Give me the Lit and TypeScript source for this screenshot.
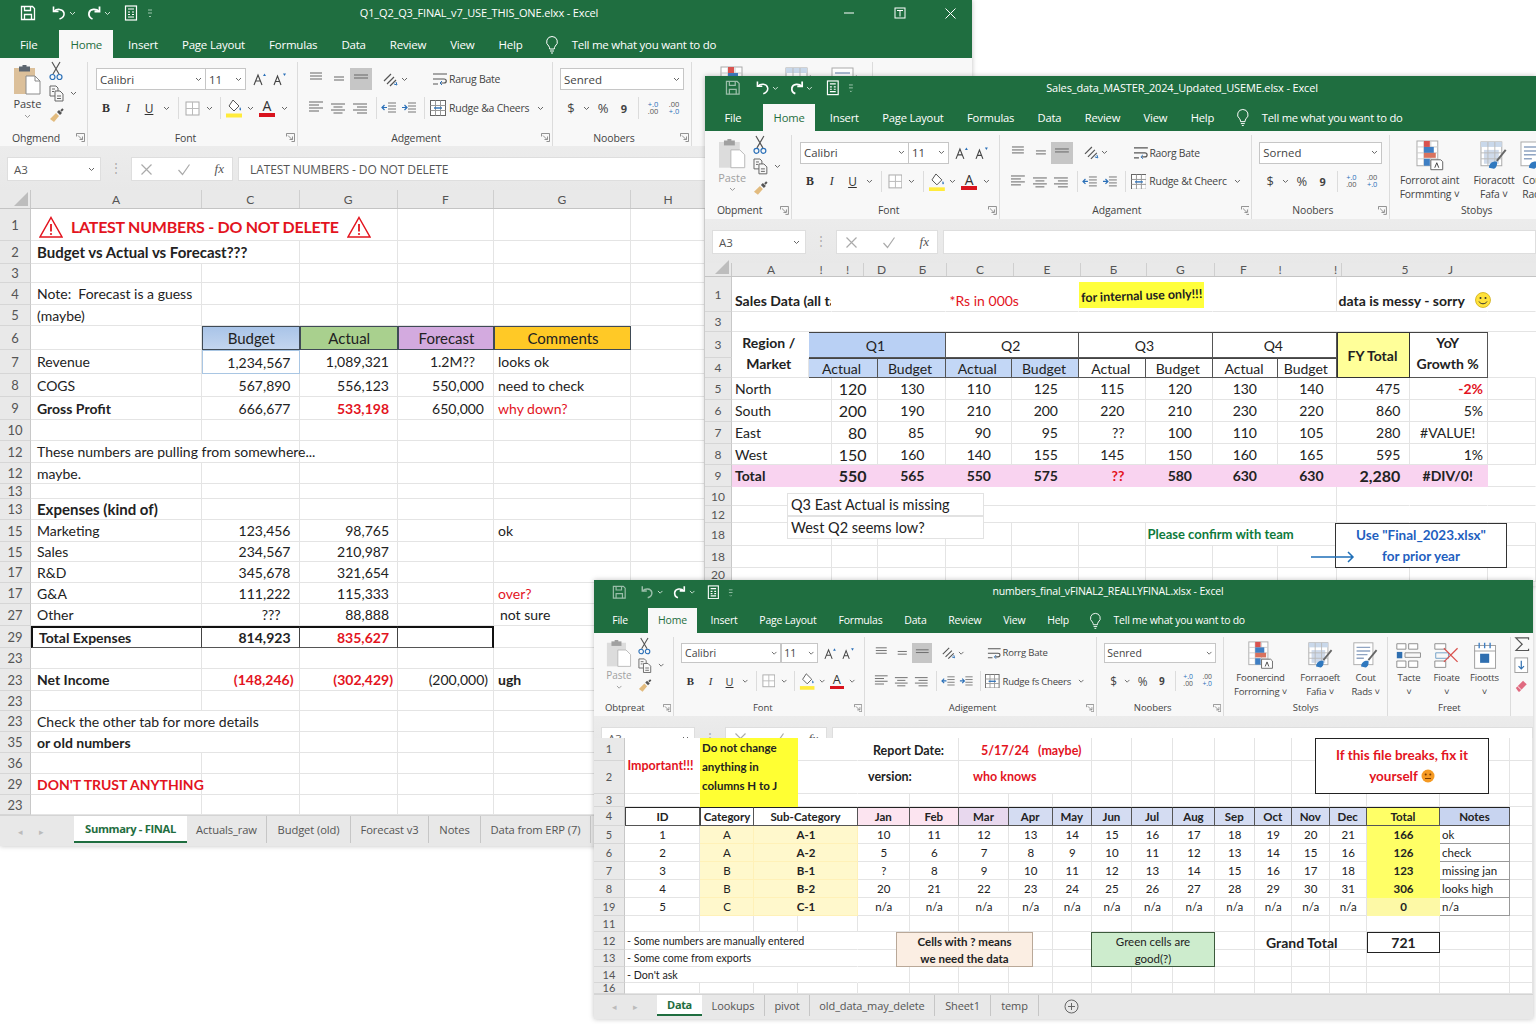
import { LitElement, html, css, svg } from "lit"
import { customElement, property } from "lit/decorators.js"

// ---------- icons ----------
const ico = (w: number, h: number, body: any, vb = `0 0 ${w} ${h}`) =>
  html`<svg width=${w} height=${h} viewBox=${vb} fill="none">${body}</svg>`

const caret = (c = "#666") =>
  ico(7, 5, svg`<path d="M1 1l2.5 2.5L6 1" stroke=${c} stroke-width="1"/>`)

const I = {
  save: ico(16, 16, svg`<g stroke="#fff" stroke-width="1.3"><path d="M1.5 1.5h11l2 2v11h-13z"/><path d="M4.5 14.5v-5h7v5M4.5 1.5v4h6v-4"/></g>`),
  undo: ico(16, 16, svg`<g stroke="#fff" stroke-width="1.6"><path d="M2.5 1.5v5h5"/><path d="M3 6.5c2.5-3 9-3 10 1.500.4 2.500-1.500 5-4.500 6"/></g>`),
  redo: ico(16, 16, svg`<g stroke="#fff" stroke-width="1.8"><path d="M13.500 1.500v5h-5"/><path d="M13 6.500c-2.500-3-9-3-10 1.500-.4 2.500 1 5 3.500 6"/></g>`),
  form: ico(14, 16, svg`<g stroke="#fff" stroke-width="1.2"><rect x="1.500" y="1" width="11" height="14"/><path d="M4 4h6M4 7h2M8 7h2M4 9.500h2M8 9.500h2M4 12h6"/></g>`),
  qmenu: ico(6, 10, svg`<path d="M1 2h4M1 5h4M2 8l1 1 1-1" stroke="#9cc4ac" stroke-width="1"/>`),
  bulb: ico(14, 19, svg`<path d="M7 1.500a5.300 5.300 0 0 0-3.300 9.500c.7.8 1 1.800 1 3h4.600c0-1.200.3-2.200 1-3A5.300 5.300 0 0 0 7 1.500zM5 16h4M6 18h2" stroke="#fff" stroke-width="1"/>`),
  paste: ico(28, 30, svg`<rect x="1" y="3" width="21" height="26" fill="#dcc09a"/><rect x="6" y="1.500" width="11" height="5" fill="#5d6670"/><rect x="9.500" y="0" width="4" height="3" fill="#5d6670"/><path d="M13 11h9l5 5v13H13z" fill="#fff" stroke="#8a8a8a"/><path d="M22 11v5h5" stroke="#8a8a8a"/>`),
  pasteOff: ico(28, 30, svg`<rect x="1" y="3" width="21" height="26" fill="#dcdcdc"/><rect x="6" y="1.500" width="11" height="5" fill="#a0a0a0"/><rect x="9.500" y="0" width="4" height="3" fill="#a0a0a0"/><path d="M13 11h9l5 5v13H13z" fill="#fff" stroke="#b8b8b8"/>`),
  scissors: ico(14, 20, svg`<g stroke-width="1.200"><path d="M3 1l7 12M11 1L4 13" stroke="#555"/><circle cx="3.500" cy="16" r="2.500" stroke="#2b70b8"/><circle cx="10.500" cy="16" r="2.500" stroke="#2b70b8"/></g>`),
  copy: ico(15, 17, svg`<g stroke="#666" stroke-width="1"><path d="M1 1h6l2 2v8H1z"/><path d="M6 6h5l3 3v7H6z" fill="#f8f8f8"/><path d="M3 4h3M3 6.500h2M8 11h4M8 13.500h4"/></g>`),
  painter: ico(16, 16, svg`<path d="M1 12l6-6 3 3-5 6z" fill="#e2bb7e"/><path d="M8 5l2-2 3 3-2 2z" fill="#555"/><path d="M12 4l2-2" stroke="#555" stroke-width="2"/>`),
  launcher: ico(9, 9, svg`<path d="M.5 3.500v-3h8v8h-3M2 2.500l4 4M3.500 6.500H6.500V3.500" stroke="#777" stroke-width=".8"/>`),
  border: ico(15, 15, svg`<rect x="1" y="1" width="13" height="13" stroke="#aaa" fill="#fff"/><path d="M7.500 1v13M1 7.500h13" stroke="#bbb"/>`),
  fill: ico(18, 20, svg`<path d="M8 2l6 6-5 5-5-5z" stroke="#555" fill="#fff"/><path d="M15 9c1 1.500 1.500 2.500.5 3.500-1 0-1.500-1.500-.5-3.500z" fill="#2b70b8"/><rect x="1" y="15.500" width="16" height="4" fill="#ffeb3b"/>`),
  grow: ico(13, 14, svg`<path d="M1 13l4-10 4 10M2.500 9h5" stroke="#444" stroke-width="1.100"/><path d="M10 4l1.500-2.500L13 4z" fill="#2b70b8"/>`),
  shrink: ico(13, 14, svg`<path d="M1 13l3.500-9 3.500 9M2.500 9.500h4" stroke="#444" stroke-width="1.100"/><path d="M10 1.500l1.500 2.500L13 1.500z" fill="#2b70b8"/>`),
  orient: ico(17, 15, svg`<path d="M2 9l7-7M5 12l7-7M8 14l6-6" stroke="#555" stroke-width="1.200"/><path d="M12 12l3 1-1-3" stroke="#2b70b8"/>`),
  wrap: ico(16, 16, svg`<path d="M1 3h14M1 13h5M1 8h11c3 0 3 4 0 4H9" stroke="#555" stroke-width="1.200"/><path d="M10 10l-2 2 2 2" stroke="#2b70b8"/>`),
  merge: ico(16, 16, svg`<rect x=".5" y=".5" width="15" height="15" stroke="#666" fill="#fff"/><path d="M.5 5.500h15M.5 10.500h15M5.500 .5v15M10.500 .5v15" stroke="#999"/><path d="M4 8h8" stroke="#2b70b8" stroke-width="1.400"/>`),
  cf: ico(30, 32, svg`<rect x="2" y="1" width="21" height="25" fill="#fff" stroke="#aaa"/><path d="M2 7h21M2 13h21M2 19h21M9 1v25M16 1v25" stroke="#ccc"/><rect x="9" y="1" width="6" height="6" fill="#d9534f"/><rect x="9" y="7" width="10" height="6" fill="#3f7fc4"/><rect x="9" y="13" width="12" height="5" fill="#d9735f"/><rect x="9" y="19" width="6" height="7" fill="#3f7fc4"/><path d="M16 20h10l2 2v8H16z" fill="#fff" stroke="#666"/><path d="M20 28l2-5 2 5" stroke="#444"/>`),
  ft: ico(30, 32, svg`<rect x="2" y="2" width="21" height="24" fill="#fff" stroke="#aaa"/><rect x="2" y="2" width="21" height="5" fill="#c9d8ea"/><rect x="5" y="10" width="15" height="14" fill="#cfdaea"/><path d="M2 13h21M2 19h21M9 2v24M16 2v24" stroke="#bbb"/><path d="M27 10l-9 11" stroke="#666" stroke-width="2"/><path d="M10 28c0-5 5-7 8-6 1 3-1 7-3 7z" fill="#2f78bf"/>`),
  cs: ico(30, 32, svg`<rect x="2" y="2" width="21" height="24" fill="#fff" stroke="#aaa"/><path d="M5 7h15M5 11h15M5 15h12M5 19h8" stroke="#8fa4c2" stroke-width="1.500"/><path d="M27 10l-9 11" stroke="#666" stroke-width="2"/><path d="M10 28c0-5 5-7 8-6 1 3-1 7-3 7z" fill="#2f78bf"/>`),
  tinsert: ico(30, 32, svg`<path d="M2 3h10v6H2zM15 3h10v6H15zM2 22h10v7H2zM15 22h10v7H15z" stroke="#888" fill="#fff"/><rect x="2" y="12" width="6" height="7" fill="#2f6fb0"/><path d="M11 13h17v5H11z" stroke="#888"/>`),
  tdelete: ico(30, 32, svg`<path d="M2 3h12v6H2zM2 22h12v7H2z" stroke="#888" fill="#fff"/><path d="M3 13h14v6H3z" stroke="#6a9cc4"/><path d="M12 8l15 15M27 8L12 23" stroke="#d9534f" stroke-width="1.400"/>`),
  tformat: ico(30, 32, svg`<rect x="4" y="5" width="23" height="25" fill="#fff" stroke="#999"/><path d="M4 11h23" stroke="#999"/><path d="M9 2v6M15 2v6M21 2v6" stroke="#3f7fc4" stroke-width="1.500"/><rect x="10" y="14" width="10" height="10" fill="#2f6fb0"/>`),
  sigma: ico(18, 16, svg`<path d="M16 3V1H2l7 7-7 7h14v-2" stroke="#555" stroke-width="1.300"/>`),
  down: ico(16, 18, svg`<rect x="1" y="1" width="14" height="16" stroke="#999" fill="#fff"/><path d="M8 4v9M5 10l3 3 3-3" stroke="#2f6fb0" stroke-width="1.300"/>`),
  eraser: ico(16, 16, svg`<path d="M2 11l8-8 4 4-8 8H5z" fill="#e06a80"/><path d="M4 9l4 4" stroke="#fff"/>`),
  warn: ico(24, 22, svg`<path d="M12 1.500L23 21H1z" stroke="#e3141e" stroke-width="1.500"/><path d="M12 8v7.500" stroke="#e3141e" stroke-width="1.800"/><circle cx="12" cy="18" r="1.100" fill="#e3141e"/>`),
  smile: ico(16, 16, svg`<circle cx="8" cy="8" r="7.500" fill="#ffe23b" stroke="#c9a400" stroke-width=".7"/><circle cx="5.500" cy="6" r="1" fill="#333"/><circle cx="10.500" cy="6" r="1" fill="#333"/><path d="M4 9.500c1.500 3 6.500 3 8 0" stroke="#333"/>`),
  meh: ico(14, 14, svg`<circle cx="7" cy="7" r="6.500" fill="#f59a23"/><circle cx="4.700" cy="5.500" r="1" fill="#7a3a00"/><circle cx="9.300" cy="5.500" r="1" fill="#7a3a00"/><path d="M4 9.500h6" stroke="#7a3a00"/>`),
  arrow: ico(44, 12, svg`<path d="M0 6h42M37 1l5 5-5 5" stroke="#1f6fb8" stroke-width="1.500"/>`),
  plus: ico(15, 15, svg`<circle cx="7.500" cy="7.500" r="6.500" stroke="#666"/><path d="M7.500 4v7M4 7.500h7" stroke="#666"/>`),
  x: ico(13, 13, svg`<path d="M1.500 1.500l10 10M11.500 1.500l-10 10" stroke="#aaa" stroke-width="1.200"/>`),
  check: ico(14, 13, svg`<path d="M1.500 7l4 4.500L12.500 1.500" stroke="#aaa" stroke-width="1.200"/>`),
  wMin: ico(12, 4, svg`<path d="M1 2h10" stroke="#fff"/>`),
  wMax: ico(12, 12, svg`<rect x="1" y="1" width="10" height="10" stroke="#fff"/><path d="M3 3.500h6M6 3.500v6" stroke="#fff"/>`),
  wClose: ico(13, 13, svg`<path d="M1.500 1.500l10 10M11.500 1.500l-10 10" stroke="#fff"/>`),
}

// lines of an align button
const al = (rows: number[], sel = false) =>
  ico(16, 16, svg`${rows.map((r, i) => svg`<path d="M1 ${i * 3 + 2 + (sel ? 8 : 0)}h${r}" stroke="#666"/>`)}`)
const centered = (rows: number[], top = 4) =>
  ico(16, 16, svg`${rows.map((r, i) => svg`<path d="M${8 - r / 2} ${i * 3 + top}h${r}" stroke="#666"/>`)}`)
const right = (rows: number[]) =>
  ico(16, 16, svg`${rows.map((r, i) => svg`<path d="M${15 - r} ${i * 3 + 4}h${r}" stroke="#666"/>`)}`)
const indent = (dir: number) =>
  ico(16, 14, svg`<path d="M7 2h8M7 5h8M7 8h8M7 11h8" stroke="#777"/><path d=${dir ? "M1 6.500h5M3.500 4l2.500 2.500L3.500 9" : "M6 6.500H1M3.500 4L1 6.500 3.500 9"} stroke="#2b70b8" stroke-width="1.200"/>`)

// ---------- ribbon ----------
type RibbonCfg = {
  off?: boolean
  font: string
  labels: [string, string, string, string]
  wrap: string
  merge: string
  fmt: string
  styles?: { label: string; btns: any[]; w: number }[]
  tail?: boolean
}

@customElement("xl-ribbon")
export class XlRibbon extends LitElement {
  static styles = css`
    :host {
      display: block;
      zoom: var(--rz, var(--z, 1));
    }
    .ribbon {
      display: flex;
      height: var(--rh, 88px);
      box-sizing: border-box;
      background: #f8f8f8;
      color: #444;
      font: 11px "Open Sans", sans-serif;
      overflow: hidden;
    }
    .group {
      position: relative;
      flex: none;
      box-sizing: border-box;
      height: calc(var(--rh, 88px) - 4px);
      margin-top: 4px;
      padding-top: var(--rp, 6px);
      border-right: 1px solid #dcdcdc;
    }
    .clip { width: 88px; }
    .font { width: 210px; }
    .align { width: 255px; }
    .number { width: 139px; }
    .area { height: var(--ra, 63px); }
    .row {
      display: flex;
      align-items: center;
      height: 22px;
      margin-bottom: var(--rg, 7px);
    }
    .label {
      height: 14px;
      line-height: 14px;
      text-align: center;
      font-size: 10.500px;
      letter-spacing: -0.1px;
    }
    .clip .label { text-align: left; padding-left: 12px; }
    .font .label { padding-right: 14px; }
    .align .label { padding-right: 18px; }
    .number .label { padding-right: 16px; }
    .launch {
      position: absolute;
      right: 2px;
      bottom: 4px;
      display: flex;
    }
    .sl {
      flex: none;
      display: flex;
      align-items: center;
      justify-content: center;
      height: 22px;
    }
    .s8 { width: 8px; }
    .s11 { width: 11px; }
    .s12 { width: 12px; }
    .s14 { width: 14px; }
    .s16 { width: 16px; }
    .s18 { width: 18px; }
    .s20 { width: 20px; }
    .s22 { width: 22px; }
    .sep {
      flex: none;
      width: 1px;
      height: 22px;
      margin: 0 2px 0 5px;
      background: #dcdcdc;
    }
    .ml1 { margin-left: 1px; }
    .ml2 { margin-left: 2px; }
    .ml3 { margin-left: 3px; }
    .ml7 { margin-left: 7px; }
    .ml8 { margin-left: 8px; }
    .ml9 { margin-left: 9px; }
    .ml24 { margin-left: 24px; }
    .combo {
      flex: none;
      display: flex;
      align-items: center;
      justify-content: space-between;
      box-sizing: border-box;
      height: 22px;
      padding: 0 3px 0 3px;
      background: #fff;
      border: 1px solid #c6c6c6;
      font-size: 11.500px;
    }
    .cfont { width: 110px; }
    .csize { width: 41px; margin-left: -1px; }
    .cfmt { width: 124px; margin-left: 7px; }
    .sel { background: #c6c6c6; align-items: flex-end; }
    .sel svg { margin-bottom: 1px; }
    .lab { font-size: 10.500px; white-space: nowrap; letter-spacing: -0.25px; }
    .bt { font: 700 12px "Liberation Serif", serif; color: #333; }
    .bi { font: italic 12px "Liberation Serif", serif; color: #333; }
    .bu { font: 12px "Open Sans", sans-serif; text-decoration: underline; color: #333; }
    .fc {
      display: flex;
      flex-direction: column;
      align-items: center;
      font: 14px "Open Sans", sans-serif;
      line-height: 14px;
      color: #333;
    }
    .fc i {
      display: block;
      width: 16px;
      height: 4px;
      background: #d9141e;
    }
    .sym { font-size: 13px; color: #444; }
    .sym b { font-size: 11px; }
    .dec {
      font: 7.500px/7.500px "Open Sans", sans-serif;
      color: #555;
      text-align: center;
    }
    .dec b { color: #2b70b8; font-weight: 400; }
    .cliparea { display: flex; height: calc(var(--ra, 63px) + 6px); margin-top: -6px; }
    .pastebtn {
      width: 50px;
      margin-left: 3px;
      display: flex;
      flex-direction: column;
      align-items: center;
      padding-top: 3px;
      font-size: 11px;
      line-height: 14px;
    }
    .pastebtn svg:first-child { margin-bottom: 2px; }
    .pastebtn svg:last-child { margin-top: 3px; }
    .off { color: #a0a0a0; }
    .tools { width: 36px; margin-top: -2px; }
    .tools .tl { display: flex; height: 22px; align-items: center; }
    .tools .tl span { width: 6px; }
    .tl svg:first-child { margin-left: -3px; }
    .bigs { display: flex; height: var(--ra, 63px); }
    .big {
      flex: none;
      display: flex;
      flex-direction: column;
      align-items: center;
      font-size: 10.500px;
      line-height: 15px;
      letter-spacing: -0.2px;
      white-space: nowrap;
      margin-top: -2px;
    }
    .big svg:first-child { margin-bottom: 1px; }
    .tail {
      flex: none;
      width: 22px;
      padding: 4px 0 0 3px;
      display: flex;
      flex-direction: column;
      gap: 6px;
    }
  `

  @property({ attribute: false }) cfg!: RibbonCfg

  render() {
    const c = this.cfg
    return html`<div class="ribbon">
      <div class="group clip">
        <div class="cliparea">
          <div class="pastebtn ${c.off ? "off" : ""}">
            ${c.off ? I.pasteOff : I.paste}
            <span>Paste</span>
            ${caret("#999")}
          </div>
          <div class="tools">
            <div class="tl">${I.scissors}</div>
            <div class="tl">${I.copy}<span></span>${caret()}</div>
            <div class="tl">${I.painter}</div>
          </div>
        </div>
        <div class="label">${c.labels[0]}</div>
        <div class="launch">${I.launcher}</div>
      </div>

      <div class="group font">
        <div class="area">
          <div class="row">
            <div class="combo cfont ml8">${c.font}${caret()}</div>
            <div class="combo csize">11${caret()}</div>
            <span class="sl s20 ml3">${I.grow}</span>
            <span class="sl s20">${I.shrink}</span>
          </div>
          <div class="row ml7">
            <span class="sl s22 bt">B</span>
            <span class="sl s22 bi">I</span>
            <span class="sl s20 bu">U</span>
            <span class="sl s14">${caret()}</span>
            <span class="sep"></span>
            <span class="sl s22">${I.border}</span>
            <span class="sl s12">${caret()}</span>
            <span class="sep"></span>
            <span class="sl s22">${I.fill}</span>
            <span class="sl s11">${caret()}</span>
            <span class="sl s22"><span class="fc">A<i></i></span></span>
            <span class="sl s12">${caret()}</span>
          </div>
        </div>
        <div class="label">Font</div>
        <div class="launch">${I.launcher}</div>
      </div>

      <div class="group align">
        <div class="area">
          <div class="row ml7">
            <span class="sl s22">${centered([12, 12, 12], 2)}</span>
            <span class="sl s22 ml1">${centered([10, 10], 6)}</span>
            <span class="sl s22 sel">${al([14, 14])}</span>
            <span class="sl s20 ml8">${I.orient}</span>
            <span class="sl s8">${caret()}</span>
            <span class="sl s16 ml24">${I.wrap}</span>
            <span class="lab ml1">${c.wrap}</span>
          </div>
          <div class="row ml7">
            <span class="sl s22">${al([14, 10, 14, 10])}</span>
            <span class="sl s22">${centered([14, 9, 14, 9])}</span>
            <span class="sl s22">${right([14, 10, 14, 10])}</span>
            <span class="sep"></span>
            <span class="sl s20">${indent(0)}</span>
            <span class="sl s20">${indent(1)}</span>
            <span class="sep"></span>
            <span class="sl s16 ml3">${I.merge}</span>
            <span class="lab ml3">${c.merge}</span>
            <span class="sl s8 ml7">${caret()}</span>
          </div>
        </div>
        <div class="label">${c.labels[2]}</div>
        <div class="launch">${I.launcher}</div>
      </div>

      <div class="group number">
        <div class="area">
          <div class="row"><div class="combo cfmt">${c.fmt}${caret()}</div></div>
          <div class="row ml9">
            <span class="sl s18 sym">$</span>
            <span class="sl s12">${caret()}</span>
            <span class="sl s18 sym ml2">%</span>
            <span class="sl s18 sym ml3"><b>9</b></span>
            <span class="sep"></span>
            <span class="sl s18 dec ml3"><span><b>+.0</b><br />.00</span></span>
            <span class="sl s18 dec ml3"><span>.00<br /><b>+.0</b></span></span>
          </div>
        </div>
        <div class="label">${c.labels[3]}</div>
        <div class="launch">${I.launcher}</div>
      </div>

      ${(c.styles ?? []).map(
        (g) => html`<div class="group" style="width:${g.w}px">
          <div class="bigs">
            ${g.btns.map(
              (b) => html`<div class="big" style="width:${b[0]}px">
                ${b[1]}<span>${b[2]}</span><span>${b[3]}</span>
              </div>`
            )}
          </div>
          <div class="label">${g.label}</div>
        </div>`
      )}
      ${c.tail
        ? html`<div class="tail">${I.sigma}${I.down}${I.eraser}</div>`
        : ""}
    </div>`
  }
}

// ---------- sheet ----------
type Cell = { t: any; c: string; s: number; rs: number }
type Row = [string | number, number, Cell[]]

const C = (t: any = "", c = "", s = 1, rs = 1): Cell => ({ t, c, s, rs })
const blanks = (n: number, c = "") => Array.from({ length: n }, () => C("", c))

@customElement("xl-sheet")
export class XlSheet extends LitElement {
  static styles = css`
    :host {
      display: block;
      font-family: Lato, "Noto Sans", sans-serif;
      font-size: var(--fs, 14px);
      color: #222;
      background: #fff;
    }
    .head {
      display: flex;
      background: #e9e9e9;
      color: #555;
      font-size: 12px;
      border-bottom: 1px solid #c4c4c4;
      box-sizing: border-box;
    }
    .corner {
      flex: none;
      position: relative;
      box-sizing: border-box;
      border-right: 1px solid #c8c8c8;
    }
    .corner i {
      position: absolute;
      right: 2px;
      bottom: 2px;
      border-style: solid;
      border-width: 0 0 14px 14px;
      border-color: transparent transparent #bdbdbd transparent;
    }
    .hc {
      flex: none;
      display: flex;
      align-items: center;
      justify-content: center;
      box-sizing: border-box;
      white-space: nowrap;
      overflow: hidden;
    }
    .sepr { border-right: 1px solid #cfcfcf; }
    .grid { display: grid; }
    .rh {
      grid-column: 1;
      display: flex;
      align-items: center;
      justify-content: center;
      background: #e9e9e9;
      color: #555;
      font-size: var(--rhfs, 13px);
      border-right: 1px solid #c8c8c8;
      border-bottom: 1px solid #d6d6d6;
      box-sizing: border-box;
    }
    .cell {
      display: flex;
      align-items: center;
      box-sizing: border-box;
      min-width: 0;
      padding: 0 5px 0 var(--cpl, 6px);
      white-space: pre;
      border-right: 1px solid #e4e4e4;
      border-bottom: 1px solid #e4e4e4;
    }
    .cell svg { flex: none; }
    .nb { border-right-color: transparent; }
    .nbb { border-bottom-color: transparent; }
    .b { font-weight: 700; }
    .r { justify-content: flex-end; }
    .ce { justify-content: center; text-align: center; }
    .red { color: #e3141e; }
    .green { color: #0e7a3c; font-size: 13px; }
    .clipped { overflow: hidden; }
    .pr4 { padding-right: 4px; }
    .pr5 { padding-right: 5px; }
    .pr8 { padding-right: 8px; }
    .pr9 { padding-right: 9px; }
    .pr10 { padding-right: 10px; }
    .pr12 { padding-right: 12px; }
    .pr18 { padding-right: 18px; }
    .pr20 { padding-right: 20px; }
    .pl0 { padding-left: 2px; }
    .pl4 { padding-left: 4px; }
    .pl6 { padding-left: 6px; }
    .pl10 { padding-left: 10px; }
    .pl14 { padding-left: 14px; }
    .pl15 { padding-left: 15px; }
    .pl22 { padding-left: 22px; }
    .big { font-size: 16px; }
    .fs13 { font-size: 12.500px; }
    .small { font-size: 10.700px; }
    .up4 { padding-bottom: 4px; }
    .up9 { padding-bottom: 9px; }
    .dn3 { padding-top: 3px; }
    .dn12 { padding-top: 12px; }
    .title {
      gap: 8px;
      padding: 4px 0 0 8px;
      font-size: 16px;
      letter-spacing: -0.25px;
      font-weight: 700;
      color: #e3141e;
    }
    .h15 { font-size: 15px; }
    /* window one */
    .hd { border: 1px solid #3f4a55; justify-content: center; font-size: 15px; }
    .budget { background: linear-gradient(#a9c4e8, #c3d5ee); }
    .actual { background: #a9d08e; }
    .forecast { background: #d3aadf; }
    .comments { background: #ffc926; }
    .picked { border: 1px solid #a9c6e3; }
    .tt { border-top: 2px solid #111; border-bottom: 1px solid #555; border-right: 1px solid #444; }
    .tl { border-left: 2px solid #111; }
    .tr { border-right: 2px solid #111; }
    /* window two */
    .dk { border-top: 1px solid #444; border-right: 1px solid #555; border-bottom: 1px solid #555; }
    .q1 { background: #b9d0f4; }
    .q1s { background: #c3d7f6; }
    .fy { background: #ffff99; border: 1px solid #333; justify-content: center; }
    .pink { background: #f9d3f0; border-color: transparent; }
    .lines { flex-direction: column; justify-content: center; align-items: center; line-height: 21px; }
    .smile { gap: 10px; }
    /* window three */
    .yel { background: #ffff33; flex-direction: column; align-items: flex-start; line-height: 19px; border-color: transparent; padding-left: 2px; }
    .ly { background: #fff8cc; border-color: #fff1b8; }
    .ty { background: #ffff66; border-color: #ffff66; }
    .ty0 { background: #fdf9a6; border-color: #fdf9a6; }
    .hh { border-top: 1px solid #222; border-bottom: 1px solid #555; justify-content: center; font-weight: 700; border-right: 1px solid #555; padding: 0; }
    .wh { background: #fff; border-left: 1px solid #444; }
    .p1 { background: #fce4f0; }
    .p2 { background: #e8d8ee; }
    .bl { background: #d4dcf2; }
    .nt { background: #c8d4f0; }
    .ntc { border-bottom: 1px solid #999; border-right: 1px solid #999; }
  `

  @property({ attribute: false }) cols: number[] = []
  @property({ attribute: false }) rows: Row[] = []
  @property({ attribute: false }) head: any[] | null = null
  @property({ type: Number }) rw = 31
  @property({ type: Number }) hh = 19

  render() {
    return html`
      ${this.head
        ? html`<div class="head" style="height:${this.hh}px">
            <div class="corner" style="width:${this.rw}px"><i></i></div>
            ${this.head.map(
              (h) => html`<div class="hc ${h[2] ? "sepr" : ""}" style="width:${h[1]}px">${h[0]}</div>`
            )}
          </div>`
        : ""}
      <div
        class="grid"
        style="grid-template-columns:${this.rw}px ${this.cols.map((c) => c + "px").join(" ")};grid-template-rows:${this.rows.map((r) => r[1] + "px").join(" ")}"
      >
        ${this.rows.map(
          (r, i) => html`<div class="rh" style="grid-row:${i + 1}">${r[0]}</div>
            ${r[2].map(
              (c) => html`<div class="cell ${c.c}" style="grid-row:${i + 1}/span ${c.rs};grid-column:span ${c.s}">${c.t}</div>`
            )}`
        )}
      </div>
    `
  }
}

// ---------- window ----------
@customElement("xl-window")
export class XlWindow extends LitElement {
  static styles = css`
    :host {
      display: flex;
      flex-direction: column;
      overflow: hidden;
      background: #f8f8f8;
      box-shadow: 0 0 5px rgba(0, 0, 0, 0.25);
      font-family: "Open Sans", sans-serif;
    }
    .titlebar {
      position: relative;
      flex: none;
      height: var(--tb, 29px);
      background: #1f6e40;
      color: #fff;
    }
    .quick {
      display: flex;
      align-items: center;
      height: 100%;
      padding: 0 0 3px 20px;
      box-sizing: border-box;
      zoom: var(--z, 1);
    }
    .quick span { display: flex; }
    .dim { opacity: 0.55; }
    .m15 { margin-left: 15px; }
    .m10 { margin-left: 10px; }
    .m13 { margin-left: 13px; }
    .m8 { margin-left: 9px; }
    .m6 { margin-left: 2px; }
    .name {
      position: absolute;
      top: 0;
      left: var(--tc, 480px);
      transform: translateX(-50%);
      line-height: calc(var(--tb, 29px) - 4px);
      font-size: var(--tfs, 11px);
      letter-spacing: -0.15px;
      white-space: nowrap;
    }
    .ctl {
      position: absolute;
      top: 0;
      right: -4px;
      display: flex;
      height: 100%;
      padding-bottom: 3px;
      box-sizing: border-box;
    }
    .ctl span {
      width: 51px;
      display: flex;
      align-items: center;
      justify-content: center;
    }
    .tabs {
      flex: none;
      height: var(--th, 29px);
      background: #1f6e40;
      color: #fff;
    }
    .tabs-in {
      display: flex;
      height: 100%;
      zoom: var(--z, 1);
      font-size: 11.500px;
      letter-spacing: -0.2px;
      padding-left: 8px;
      padding-top: 1px;
      box-sizing: border-box;
    }
    .tab {
      display: flex;
      align-items: center;
      padding: 0 12px;
      white-space: nowrap;
    }
    .tab.file { margin-right: 10px; }
    .tab.home {
      padding: 0 11px;
      margin-right: 3px;
      background: #f8f8f8;
      color: #1f6e40;
    }
    .tab.tell { padding: 0; letter-spacing: -0.25px; }
    .bulb { display: flex; align-items: center; margin: 0 13px 0 10px; }
    .fbar {
      flex: none;
      display: flex;
      height: var(--fb, 44px);
      box-sizing: border-box;
      padding: 11px 0 0 7px;
      background: linear-gradient(#ececec, #e8e8e8);
      overflow: hidden;
      font-size: 11.500px;
      color: #555;
    }
    .box {
      flex: none;
      display: flex;
      align-items: center;
      box-sizing: border-box;
      height: 24px;
      background: #fff;
      border: 1px solid #dedede;
    }
    .namebox { width: 94px; padding: 0 5px 0 6px; justify-content: space-between; }
    .dots { flex: none; width: 30px; text-align: center; line-height: 22px; color: #aaa; }
    .fxbox { width: 102px; padding: 0 8px; justify-content: space-between; }
    .fx { font: italic 13px "Liberation Serif", serif; }
    .input { flex: 1; margin-left: 5px; padding-left: 11px; font-size: 12px; letter-spacing: -0.1px; }
    .strip {
      flex: none;
      display: flex;
      height: var(--st, 31px);
      background: #e8e8e8;
      border-top: 1px solid #d4d4d4;
      box-sizing: border-box;
      font-size: var(--stfs, 11.200px);
      color: #555;
    }
    .nav {
      flex: none;
      display: flex;
      align-items: center;
      gap: 16px;
      padding-left: 18px;
      color: #bbb;
      font-size: 9px;
      box-sizing: border-box;
    }
    .sh {
      flex: none;
      display: flex;
      align-items: center;
      justify-content: center;
      box-sizing: border-box;
      height: calc(100% - 3px);
      border-right: 1px solid #c6c6c6;
      white-space: nowrap;
      letter-spacing: -0.1px;
    }
    .sh.on {
      background: #fff;
      color: #1f6e40;
      font-weight: 700;
      letter-spacing: -0.35px;
      border-bottom: 2px solid #1f6e40;
      border-right: none;
    }
    .addsh { display: flex; align-items: center; margin-left: 25px; }
  `

  @property() name = ""
  @property() formula = ""
  @property() cell = "A3"
  @property({ type: Boolean }) ctl = false
  @property({ type: Boolean }) dimSave = false
  @property({ type: Boolean }) dimUndo = false
  @property({ attribute: false }) ribbon!: RibbonCfg
  @property({ attribute: false }) sheets: [string, number][] | null = null
  @property({ type: Number }) navW = 74
  @property({ type: Boolean }) add = false

  render() {
    const tabs = ["Insert", "Page Layout", "Formulas", "Data", "Review", "View", "Help"]
    return html`
      <div class="titlebar">
        <div class="quick">
          <span class=${this.dimSave ? "dim" : ""}>${I.save}</span>
          <span class="m15 ${this.dimUndo ? "dim" : ""}">${I.undo}</span>
          <span class="m6">${caret("#cfe2d6")}</span>
          <span class="m10">${I.redo}</span>
          <span class="m6">${caret("#cfe2d6")}</span>
          <span class="m13">${I.form}</span>
          <span class="m8">${I.qmenu}</span>
        </div>
        <div class="name">${this.name}</div>
        ${this.ctl
          ? html`<div class="ctl"><span>${I.wMin}</span><span>${I.wMax}</span><span>${I.wClose}</span></div>`
          : ""}
      </div>
      <div class="tabs">
        <div class="tabs-in">
          <div class="tab file">File</div>
          <div class="tab home">Home</div>
          ${tabs.map((t) => html`<div class="tab">${t}</div>`)}
          <div class="bulb">${I.bulb}</div>
          <div class="tab tell">Tell me what you want to do</div>
        </div>
      </div>
      <xl-ribbon .cfg=${this.ribbon}></xl-ribbon>
      <div class="fbar">
        <div class="box namebox">${this.cell}${caret()}</div>
        <div class="dots">⋮</div>
        <div class="box fxbox">${I.x}${I.check}<span class="fx">fx</span></div>
        <div class="box input">${this.formula}</div>
      </div>
      <slot></slot>
      ${this.sheets
        ? html`<div class="strip">
            <div class="nav" style="width:${this.navW}px"><span>◂</span><span>▸</span></div>
            ${this.sheets.map(
              (s, i) => html`<div class="sh ${i === 0 ? "on" : ""}" style="width:${s[1]}px">${s[0]}</div>`
            )}
            ${this.add ? html`<div class="addsh">${I.plus}</div>` : ""}
          </div>`
        : ""}
    `
  }
}

// ---------- data: window one ----------
const cols1 = [171, 97.5, 98.5, 96, 137, 74]
const head1: any[] = [
  ["A", 171, 1],
  ["C", 97.5, 1],
  ["G", 98.5, 1],
  ["F", 96, 1],
  ["G", 137, 1],
  ["H", 74, 0],
]

const num = (t: any, c = "pr8") => C(t, `r ${c}`)
const lbl = (t: any, c = "") => C(t, c)
const tail = (t: any = "", c = "pl4") => [C(t, c), C()]
const r1 = (n: any, h: number, a: any = "", ac = "", b: any = "", cc: any = "", d: any = "", dc = "", e: any = "", ec = "") =>
  [n, h, [lbl(a, ac), num(b), num(cc, "pr8"), num(d, dc || "pr9"), ...tail(e, ec || "pl4")]] as Row

const rows1: Row[] = [
  [1, 32, [C(html`${I.warn}<span>LATEST NUMBERS - DO NOT DELETE</span>${I.warn}`, "title", 3), ...blanks(3)]],
  [2, 23, [C("Budget vs Actual vs Forecast???", "b h15", 2), ...blanks(4)]],
  r1(3, 19),
  r1(4, 22, "Note:  Forecast is a guess"),
  r1(5, 21, "(maybe)"),
  [6, 24, [C(), C("Budget", "hd budget"), C("Actual", "hd actual"), C("Forecast", "hd forecast"), C("Comments", "hd comments"), C()]],
  [7, 24, [C("Revenue"), C("1,234,567", "r pr8 picked"), num("1,089,321"), num("1.2M??", "pr18"), C("looks ok", "pl4"), C()]],
  r1(8, 23, "COGS", "", "567,890", "556,123", "550,000", "", "need to check"),
  [9, 23, [C("Gross Profit", "b"), num("666,677"), num("533,198", "pr8 b red"), num("650,000", "pr9"), C("why down?", "pl4 red"), C()]],
  r1(10, 21),
  [12, 22, [C("These numbers are pulling from somewhere...", "", 2), ...blanks(4)]],
  r1(12, 21, "maybe."),
  r1(13, 15),
  r1(13, 21, "Expenses (kind of)", "b h15"),
  r1(15, 22, "Marketing", "", "123,456", html`98,765`, "", "", "ok"),
  r1(15, 20, "Sales", "", "234,567", "210,987"),
  r1(17, 21, "R&D", "", "345,678", "321,654"),
  [17, 21, [C("G&A"), num("111,222"), num("115,333"), C(), C("over?", "pl4 red"), C()]],
  [27, 22, [C("Other"), num("???", "pr18"), num("88,888"), C(), C("not sure", "pl6"), C()]],
  [29, 22, [C("Total Expenses", "b tt tl"), C("814,923", "r pr8 b tt"), C("835,627", "r pr8 b red tt"), C("", "tt tr"), ...blanks(2)]],
  r1(23, 21),
  [23, 22, [C("Net Income", "b"), C("(148,246)", "r b red pr5"), C("(302,429)", "r b red pr4"), C("(200,000)", "r pr5"), C("ugh", "b pl4"), C()]],
  r1(23, 20),
  [23, 21, [C("Check the other tab for more details", "", 2), ...blanks(4)]],
  [35, 21, [C("or old numbers", "b", 2), ...blanks(4)]],
  r1(36, 21),
  [29, 21, [C("DON'T TRUST ANYTHING", "b red"), ...blanks(5)]],
  r1(23, 20),
]

// ---------- data: window two ----------
const cols2 = [76.5, 23.5, 45.5, 68, 66.5, 67, 66.5, 67.5, 65, 58.6, 73.8, 77.6, 48]
const head2: any[] = [
  ["A", 78, 0], ["!", 22, 0], ["!", 32, 1], ["D", 35, 0], ["Б", 48, 1], ["C", 67, 1], ["E", 67, 1],
  ["Б", 66, 1], ["G", 68, 1], ["F", 57, 0], ["!", 16, 0], ["", 42, 0], ["!", 12, 1], ["", 40, 0], ["5", 46, 0], ["J", 45, 0], ["", 60, 0],
]
const pads = ["pr10", "pr20", "pr20", "pr20", "pr20", "pr20", "pr20", "pr12", "pr9", "pr4"]

const data2 = (n: any, name: string, vals: any[], yoy: any, yc = "r pr4") =>
  [
    n,
    n === 8 ? 21 : 22,
    [
      C(name, "", 2),
      ...vals.map((v, i) => C(v, `r ${pads[i]} ${i === 0 ? "big" : ""}`)),
      C(yoy, yc),
      C(),
    ],
  ] as Row

const rows2: Row[] = [
  [1, 35, [
    C("Sales Data (all tables)", "b clipped nb dn12", 2),
    C("", "nb", 2),
    C("*Rs in 000s", "red nb pl4 dn12", 2),
    C("", "nb", 2),
    C("", "", 2),
    C(html`<span>data is messy - sorry</span>${I.smile}`, "b smile pl0 nb dn12", 2),
    C("", "nb"),
  ]],
  [3, 20, [C("", "nb", 14)]],
  [3, 26, [
    C("Region /", "b ce nb nbb up4"),
    C("Q1", "q1 ce dk", 3),
    C("Q2", "ce dk", 2),
    C("Q3", "ce dk", 2),
    C("Q4", "ce dk", 2),
    C("FY Total", "b fy", 1, 2),
    C(html`<span>YoY</span><span>Growth %</span>`, "b lines dk up4", 1, 2),
    C("", "nb", 1, 2),
  ]],
  [4, 20, [
    C("Market", "b ce up9"),
    C("Actual", "q1s ce dk", 2),
    C("Budget", "q1s ce dk"),
    C("Actual", "q1s ce dk"),
    C("Budget", "q1s ce dk"),
    C("Actual", "ce dk"),
    C("Budget", "ce dk"),
    C("Actual", "ce dk"),
    C("Budget", "ce dk"),
  ]],
  data2(5, "North", [120, 130, 110, 125, 115, 120, 130, 140, 475], html`<span class="b">-2%</span>`, "r pr4 red b"),
  data2(6, "South", [200, 190, 210, 200, 220, 210, 230, 220, 860], "5%"),
  data2(7, "East", [80, 85, 90, 95, "??", 100, 110, 105, 280], "#VALUE!", "ce"),
  data2(8, "West", [150, 160, 140, 155, 145, 150, 160, 165, 595], "1%"),
  [9, 22, [
    C("Total", "b pink", 2),
    C(550, "r pr10 pink b big"),
    C(565, "r pr20 pink b"),
    C(550, "r pr20 pink b"),
    C(575, "r pr20 pink b"),
    C("??", "r pr20 pink b red"),
    C(580, "r pr20 pink b"),
    C(630, "r pr20 pink b"),
    C(630, "r pr12 pink b"),
    C("2,280", "r pr9 pink b big"),
    C("#DIV/0!", "ce pink b"),
    C("", "nb"),
  ]],
  [10, 19, [C("", "nb", 2), C("", "", 8), C("", "nb"), C("", "nb"), C("", "nb"), C("", "nb")]],
  [12, 17, [C("", "", 2), C("", "", 8), C("", "nb"), C("", "nb"), C("", "nb"), C("", "nb")]],
  [18, 23, [C("", "", 2), ...blanks(5), C("Please confirm with team", "b green pl0", 3), ...blanks(3)]],
  [18, 22, [C("", "", 2), ...blanks(11)]],
  [20, 14, [C("", "", 2), ...blanks(11)]],
]

// ---------- data: window three ----------
const cols3 = [75, 54, 44, 60, 51.5, 49.5, 50, 43.5, 39.5, 40, 41, 42, 39.5, 37.5, 37.5, 37.5, 73, 70, 23]
const mon: [string, string][] = [
  ["Jan", "p1"], ["Feb", "p1"], ["Mar", "p2"], ["Apr", "bl"], ["May", "bl"], ["Jun", "bl"],
  ["Jul", "bl"], ["Aug", "bl"], ["Sep", "bl"], ["Oct", "bl"], ["Nov", "bl"], ["Dec", "bl"],
]

const data3 = (n: any, id: any, cat: string, sub: string, vals: any[], tot: any, note: string, tc = "ty") =>
  [
    n,
    18,
    [
      C(id, "ce"),
      C(cat, "ce ly"),
      C(sub, "ce ly b", 2),
      ...vals.map((v) => C(v, "ce")),
      C(tot, `ce b ${tc}`),
      C(note, "ntc pl0"),
      C(),
    ],
  ] as Row

const seq = (s: number) => Array.from({ length: 12 }, (_, i) => s + i)

const rows3: Row[] = [
  [1, 23, [
    C("Important!!!", "b red ce nb fs13 pl0", 1, 2),
    C(html`<div>Do not change</div><div>anything in</div><div>columns H to J</div>`, "yel b", 2, 3),
    C("", "nb"),
    C("Report Date:", "b pl15 fs13 dn3", 2),
    C(html`<span>5/17/24</span><span>   (maybe)</span>`, "red b pl22 fs13 dn3", 3),
    ...blanks(10, ""),
  ]],
  [2, 33, [
    C("", "nb"),
    C("version:", "b pl10 fs13", 2),
    C("who knows", "red b pl14 fs13", 3),
    ...blanks(10, ""),
  ]],
  [3, 13, [C("", "nb"), C("", "nb"), ...blanks(15)]],
  [4, 19, [
    C("ID", "hh wh"),
    C("Category", "hh wh"),
    C("Sub-Category", "hh", 2),
    ...mon.map((m) => C(m[0], `hh ${m[1]}`)),
    C("Total", "hh ty"),
    C("Notes", "hh nt"),
    C("", ""),
  ]],
  data3(5, 1, "A", "A-1", seq(10), 166, "ok"),
  data3(6, 2, "A", "A-2", seq(5), 126, "check"),
  data3(7, 3, "B", "B-1", ["?", ...seq(8).slice(0, 11)], 123, "missing jan"),
  data3(8, 4, "B", "B-2", seq(20), 306, "looks high"),
  data3(19, 5, "C", "C-1", Array(12).fill("n/a"), 0, "n/a", "ty0"),
  [11, 16, [...blanks(4), ...blanks(15)]],
  [12, 18, [C("- Some numbers are manually entered", "nb pl0 small", 4), ...blanks(15)]],
  [13, 17, [C("- Some come from exports", "nb pl0 small", 4), ...blanks(15)]],
  [14, 16, [C("- Don't ask", "nb pl0 small", 4), ...blanks(15)]],
  [16, 11, [...blanks(4), ...blanks(15)]],
]

// ---------- ribbons ----------
const ribbon1: RibbonCfg = {
  font: "Calibri",
  labels: ["Ohgmend", "Font", "Adgement", "Noobers"],
  wrap: "Rarug Bate",
  merge: "Rudge &a Cheers",
  fmt: "Senred",
  styles: [{ label: "", w: 181, btns: [[84, I.cf, "", ""], [46, I.ft, "", ""], [46, I.cs, "", ""]] }],
}
const ribbon2: RibbonCfg = {
  off: true,
  font: "Calibri",
  labels: ["Obpment", "Font", "Adgament", "Noobers"],
  wrap: "Raorg Bate",
  merge: "Rudge &t Cheerc",
  fmt: "Sorned",
  styles: [{
    label: "Stobys",
    w: 176,
    btns: [[80, I.cf, "Forrorot aint", "Formmting ˅"], [50, I.ft, "Fioracott", "Fafa ˅"], [30, I.cs, "Cout", "Rads"]],
  }],
}
const ribbon3: RibbonCfg = {
  off: true,
  font: "Calibri",
  labels: ["Obtpreat", "Font", "Adigement", "Noobers"],
  wrap: "Rorrg Bate",
  merge: "Rudge fs Cheers",
  fmt: "Senred",
  tail: true,
  styles: [
    { label: "Stolys", w: 181, btns: [[81, I.cf, "Foonercind", "Forrorning ˅"], [50, I.ft, "Forraoeft", "Fafia ˅"], [50, I.cs, "Cout", "Rads ˅"]] },
    { label: "Freet", w: 135, btns: [[45, I.tinsert, "Tacte", "˅"], [38, I.tdelete, "Fioate", "˅"], [45, I.tformat, "Fiootts", "˅"]] },
  ],
}

// ---------- page ----------
@customElement("app-root")
export class AppRoot extends LitElement {
  static styles = css`
    :host {
      display: block;
      position: relative;
      width: 1536px;
      height: 1024px;
      overflow: hidden;
      background: #fff;
    }
    .win { position: absolute; }
    .w1 { left: 0; top: 0; width: 972px; height: 846px; --tc: 479px; --st: 31px; }
    .w2 {
      left: 705px;
      top: 76px;
      width: 831px;
      height: 510px;
      --z: 0.975;
      --rz: 0.99;
      --tb: 27px;
      --th: 28px;
      --tc: 477px;
      --rh: 89px;
      --rp: 7px;
      --ra: 63px;
      --fb: 44px;
    }
    .w3 {
      left: 594px;
      top: 580px;
      width: 939px;
      height: 439px;
      --z: 0.91;
      --tb: 27px;
      --th: 26px;
      --tc: 514px;
      --rh: 91px;
      --rp: 7px;
      --ra: 65px;
      --rg: 9px;
      --fb: 22px;
      --st: 25px;
      --tfs: 10.500px;
      --stfs: 11px;
    }
    .sh1 { --fs: 14px; }
    .sh2 { --fs: 14px; --rhfs: 12px; --cpl: 3px; }
    .sh3 { --fs: 11.500px; --rhfs: 11px; }

    .shape {
      position: absolute;
      box-sizing: border-box;
      display: flex;
      flex-direction: column;
      align-items: center;
      justify-content: center;
      font-family: Lato, sans-serif;
      white-space: nowrap;
    }
    .tag {
      left: 374px;
      top: 206px;
      width: 125px;
      height: 26px;
      background: #ffff3c;
      font-size: 12.500px;
      font-weight: 700;
      color: #222;
    }
    .tag span { display: block; transform: rotate(-2deg); }
    .note {
      left: 82px;
      width: 197px;
      height: 23px;
      align-items: flex-start;
      padding-left: 3px;
      background: #fff;
      border: 1px solid #e2e2e2;
      font-size: 14.500px;
      color: #222;
    }
    .n1 { top: 417px; }
    .n2 { top: 440px; }
    .use {
      left: 630px;
      top: 447px;
      width: 172px;
      height: 45px;
      gap: 2px;
      background: #fff;
      border: 1.500px solid #333;
      color: #1f5fc0;
      font-size: 13.500px;
      font-weight: 700;
      line-height: 19px;
    }
    .arr { left: 606px; top: 475px; }
    .fixit {
      left: 721px;
      top: 158px;
      width: 174px;
      height: 56px;
      background: #fff;
      border: 1.500px solid #222;
      color: #e3141e;
      font-size: 13.500px;
      font-weight: 700;
      line-height: 21px;
    }
    .fixit svg { vertical-align: -2px; }
    .peach {
      left: 302px;
      top: 352px;
      width: 137px;
      height: 35px;
      background: #fbeee3;
      border: 1px solid #b9a898;
      font-size: 11.500px;
      font-weight: 700;
      line-height: 17px;
      color: #222;
    }
    .mint {
      left: 497px;
      top: 352px;
      width: 124px;
      height: 35px;
      background: #cdeccd;
      border: 1.500px solid #3c5a3c;
      font-size: 11.500px;
      line-height: 17px;
      color: #222;
    }
    .gt { left: 672px; top: 352px; height: 21px; font-size: 14px; font-weight: 700; color: #222; }
    .gv {
      left: 773px;
      top: 352px;
      width: 73px;
      height: 21px;
      background: #fff;
      border: 1.500px solid #222;
      font-size: 14px;
      font-weight: 700;
      color: #222;
    }
  `

  render() {
    return html`
      <xl-window
        class="win w1"
        name="Q1_Q2_Q3_FINAL_v7_USE_THIS_ONE.elxx - Excel"
        formula="LATEST NUMBERS - DO NOT DELETE"
        ctl
        .ribbon=${ribbon1}
        .sheets=${[["Summary - FINAL", 113], ["Actuals_raw", 80], ["Budget (old)", 84], ["Forecast v3", 78], ["Notes", 52], ["Data from ERP (7)", 110]]}
      >
        <xl-sheet class="sh1" .cols=${cols1} .head=${head1} .rows=${rows1}></xl-sheet>
      </xl-window>

      <xl-window
        class="win w2"
        name="Sales_data_MASTER_2024_Updated_USEME.elsx - Excel"
        dimSave
        .ribbon=${ribbon2}
      >
        <xl-sheet class="sh2" rw="27" hh="14" .cols=${cols2} .head=${head2} .rows=${rows2}></xl-sheet>
        <div class="shape tag"><span>for internal use only!!!</span></div>
        <div class="shape note n1">Q3 East Actual is missing</div>
        <div class="shape note n2">West Q2 seems low?</div>
        <div class="shape use"><span>Use "Final_2023.xlsx"</span><span>for prior year</span></div>
        <div class="shape arr">${I.arrow}</div>
      </xl-window>

      <xl-window
        class="win w3"
        name="numbers_final_vFINAL2_REALLYFINAL.xlsx - Excel"
        cell="A3"
        dimSave
        dimUndo
        add
        .navW=${63}
        .ribbon=${ribbon3}
        .sheets=${[["Data", 45], ["Lookups", 63], ["pivot", 45], ["old_data_may_delete", 125], ["Sheet1", 56], ["temp", 48]]}
      >
        <xl-sheet class="sh3" .cols=${cols3} .rows=${rows3}></xl-sheet>
        <div class="shape fixit"><span>If this file breaks, fix it</span><span>yourself ${I.meh}</span></div>
        <div class="shape peach"><span>Cells with ? means</span><span>we need the data</span></div>
        <div class="shape mint"><span>Green cells are</span><span>good(?)</span></div>
        <div class="shape gt">Grand Total</div>
        <div class="shape gv">721</div>
      </xl-window>
    `
  }
}
